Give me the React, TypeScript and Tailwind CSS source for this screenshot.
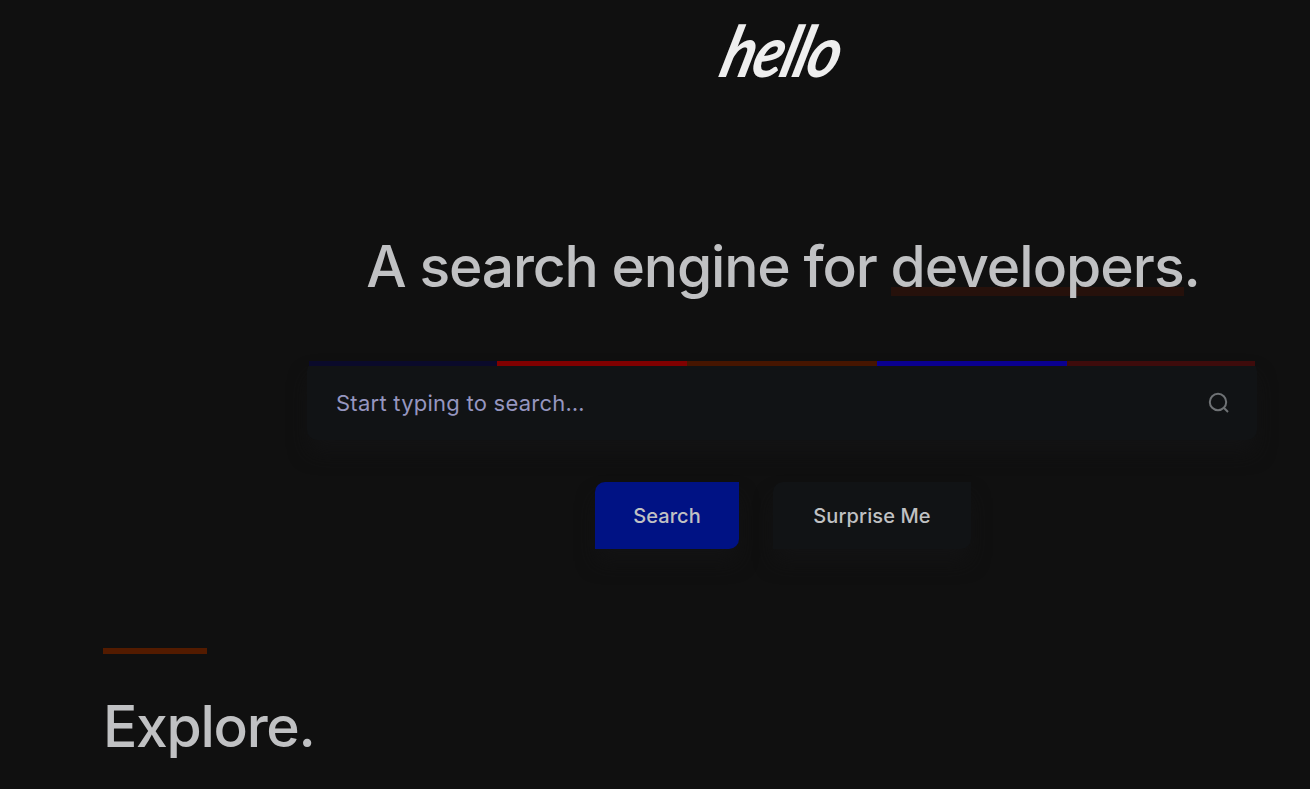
const stripes = ['bg-[#0a0a2b]', 'bg-[#800000]', 'bg-[#461500]', 'bg-[#0a0090]', 'bg-[#3e0b0b]'];

function Logo() {
  return (
    <a className="flex h-[54px] w-[122px] items-center justify-center">
      <span className="inline-block origin-center translate-x-px -translate-y-px -skew-x-[18deg] scale-x-[0.87] font-['Lato',sans-serif] text-[71px] leading-[54px] font-bold tracking-[-2px] text-[#eeeeee] italic">
        hello
      </span>
    </a>
  );
}

function SearchBox() {
  return (
    <div className="mt-[43px] h-[79px] w-[950px] rounded-[10px] bg-[#111315] px-[2px] shadow-[0_14px_20px_-2px_#131314]">
      <div className="grid h-[5px] grid-cols-[188px_190px_190px_190px_188px]">
        {stripes.map((color, i) => (
          <div key={i} className={color} />
        ))}
      </div>
      <div className="flex h-[74px] items-center justify-between pr-[24px] pl-[27px]">
        <span className="text-[22px] tracking-[0.25px] text-[#9696c0]">Start typing to search…</span>
        <svg className="-mt-px" width="24" height="24" viewBox="0 0 24 24" fill="none" stroke="#6f7275" strokeWidth="2">
          <circle cx="11" cy="11" r="8.2" />
          <path d="M21 21l-4.2-4.2" />
        </svg>
      </div>
    </div>
  );
}

function App() {
  return (
    <div className="h-[789px] overflow-hidden bg-[#101010] font-['Inter',sans-serif] text-[#c0c1c3]">
      <div className="ml-[307px] flex w-[950px] flex-col items-center pt-[24px]">
        <Logo />

        {/* Hero */}
        <h1 className="mt-[151px] ml-[2px] h-[89px] text-[57px] leading-[76px] font-medium tracking-[-1.2px] whitespace-nowrap">
          A search engine for{' '}
          <span className="bg-[linear-gradient(#26110b,#26110b)] bg-[length:100%_9px] bg-[position:0_55px] bg-no-repeat tracking-[-1px]">
            developers
          </span>
          .
        </h1>
        <SearchBox />

        {/* Actions */}
        <div className="mt-[42px] ml-[2px] flex gap-[34px] text-[20px] font-medium tracking-[0.1px]">
          <button className="h-[67px] w-[144px] rounded-tl-[10px] rounded-br-[10px] bg-[#001284] shadow-[0_14px_20px_-2px_#131314]">
            Search
          </button>
          <button className="h-[67px] w-[198px] rounded-tl-[10px] rounded-br-[10px] bg-[#111315] shadow-[0_14px_20px_-2px_#131314]">
            Surprise Me
          </button>
        </div>
      </div>

      {/* Explore */}
      <section className="mt-[99px] ml-[103px]">
        <div className="h-[6px] w-[104px] bg-[#531b00]" />
        <h2 className="mt-[35px] text-[57px] leading-[76px] font-medium tracking-[-1.3px]">Explore.</h2>
      </section>
    </div>
  );
}

export default App;
